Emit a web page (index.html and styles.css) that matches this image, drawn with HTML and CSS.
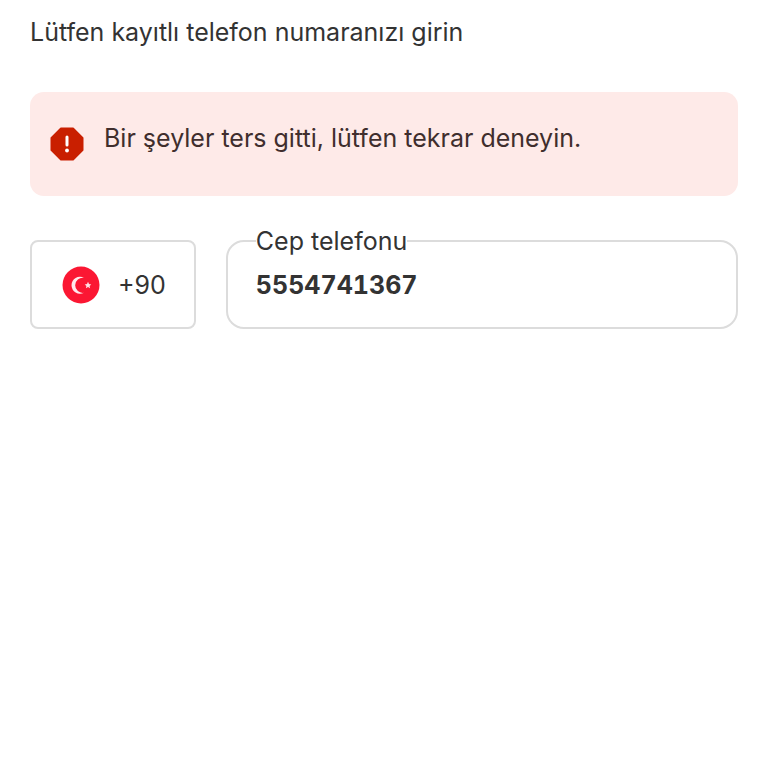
FILE: index.html
```html
<!DOCTYPE html>
<html lang="tr">
<head>
    <meta charset="UTF-8">
    <meta name="viewport" content="width=device-width, initial-scale=1.0">
    <title>Telefon</title>
    <link rel="stylesheet" href="styles.css">
</head>
<body>
    <main class="page">
        <p class="intro">Lütfen kayıtlı telefon numaranızı girin</p>

        <!-- Error message -->
        <div class="alert" role="alert">
            <svg class="alert-icon" viewBox="0 0 34 34" aria-hidden="true">
                <path d="M11 1.500h12L32.500 11v12L23 32.500H11L1.500 23V11z" fill="#c91f00" stroke="#c91f00" stroke-width="2" stroke-linejoin="round"/>
                <path d="M17 10v8" stroke="#fff" stroke-width="3" stroke-linecap="round"/>
                <circle cx="17" cy="23.500" r="1.900" fill="#fff"/>
            </svg>
            <p class="alert-text">Bir şeyler ters gitti, lütfen tekrar deneyin.</p>
        </div>

        <!-- Phone form -->
        <form class="phone-form">
            <button type="button" class="country-button">
                <svg class="flag" viewBox="0 0 38 38" aria-hidden="true">
                    <circle cx="19" cy="19" r="18.500" fill="#fb1733"/>
                    <path d="M22 11.800A8.500 8.500 0 1 0 22 26.800A7.600 7.600 0 1 1 22 11.800z" fill="#ffe9ec"/>
                    <path d="M26 15.800l1 2.300 2.300.3-1.700 1.500.5 2.400-2.100-1.200-2.100 1.200.5-2.400-1.700-1.500 2.300-.3z" fill="#ffe0e4"/>
                </svg>
                <span>+90</span>
            </button>
            <div class="field">
                <label class="field-label" for="phone">Cep telefonu</label>
                <input class="field-input" type="tel" id="phone" value="5554741367">
            </div>
        </form>
    </main>
</body>
</html>
```

FILE: styles.css
```css
* {
    box-sizing: border-box;
}

body {
    margin: 0;
    font-family: Inter, "Liberation Sans", sans-serif;
    font-size: 25px;
    line-height: 32px;
    color: #333;
    background-color: #fff;
}

.page {
    padding: 16px 30px;
}

.intro {
    margin: 0 0 44px;
}

/* Error message */
.alert {
    display: flex;
    align-items: center;
    gap: 20px;
    padding: 30px 20px 34px;
    border-radius: 14px;
    background-color: #feeae8;
}

.alert-icon {
    flex: none;
    width: 34px;
    height: 34px;
    margin-top: 4px;
}

.alert-text {
    margin: 0 0 8px;
    color: #402e2d;
}

/* Phone form */
.phone-form {
    display: flex;
    gap: 30px;
    margin-top: 44px;
}

.country-button {
    display: flex;
    align-items: center;
    gap: 18px;
    height: 89px;
    padding: 0 28px 0 30px;
    border: 2px solid #dcdcdc;
    border-radius: 8px;
    background-color: #fff;
    color: inherit;
    font: inherit;
    cursor: pointer;
}

.flag {
    width: 38px;
    height: 38px;
}

.field {
    position: relative;
    flex: 1;
}

.field-label {
    position: absolute;
    top: -15px;
    left: 30px;
    background-color: #fff;
}

.field-input {
    width: 100%;
    height: 89px;
    padding: 0 28px;
    border: 2px solid #dcdcdc;
    border-radius: 18px;
    background-color: #fff;
    color: inherit;
    font: inherit;
    font-weight: 700;
    font-variant-numeric: tabular-nums;
}
```
